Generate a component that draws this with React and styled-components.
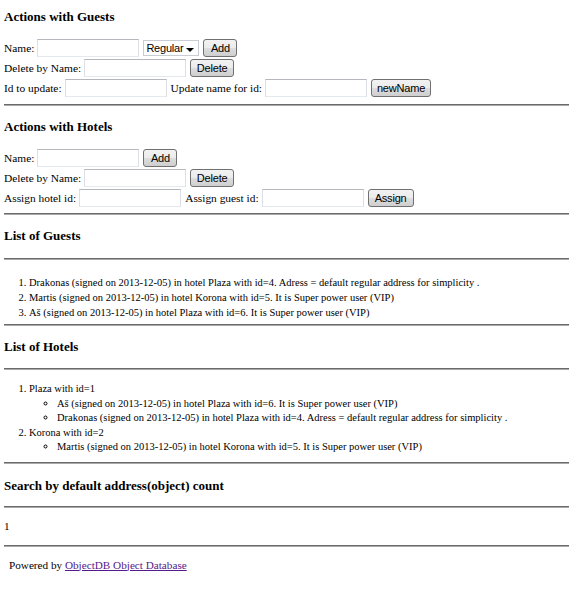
import React from "react";
import styled, { createGlobalStyle } from "styled-components";

const Global = createGlobalStyle`
  html, body { margin: 0; padding: 0; background: #fff; }
  body { font-family: "Liberation Serif", "Times New Roman", serif; font-size: 12px; color: #000; }
`;

const Page = styled.div`
  padding: 0 0 0 4px;
`;

const Heading = styled.h3`
  margin: ${(p) => p.$top ?? 13}px 0 ${(p) => p.$bottom ?? 14}px;
  font-size: 13px;
  line-height: 16px;
  font-weight: bold;
`;

const Rule = styled.hr`
  margin: 0;
  height: 0;
  border: 0;
  border-top: 1px solid #6b6b6b;
  border-bottom: 1px solid #a9a9a9;
`;

const Form = styled.div`
  display: flex;
  flex-direction: column;
  gap: 2px;
  margin-bottom: ${(p) => p.$bottom}px;
`;

const Row = styled.div`
  display: flex;
  align-items: center;
  height: 18px;
  gap: 4px;
`;

const Label = styled.span`
  font-size: 11.4px;
  line-height: 18px;
  white-space: nowrap;
  margin-right: -1px;
`;

const TextInput = styled.input`
  box-sizing: border-box;
  width: 102px;
  height: 18px;
  margin: 0;
  padding: 0 2px;
  border: 1px solid #e3e9ef;
  border-top-color: #b5b7bd;
  border-left-color: #dcdfe6;
  border-right-color: #dcdfe6;
  background: #fff;
  font: 11px "Liberation Sans", Arial, sans-serif;
  outline: none;
`;

const FakeSelect = styled.div`
  box-sizing: border-box;
  width: 56px;
  height: 16px;
  border: 1px solid #c9ccd2;
  display: flex;
  align-items: center;
  justify-content: space-between;
  padding: 0 4px 0 2px;
  font: 11px "Liberation Sans", Arial, sans-serif;
  letter-spacing: -0.2px;
  background: #fff;
`;

const Caret = styled.span`
  width: 0;
  height: 0;
  border-left: 4px solid transparent;
  border-right: 4px solid transparent;
  border-top: 4px solid #000;
  margin-top: 3px;
`;

const Button = styled.button`
  box-sizing: border-box;
  height: 18px;
  width: ${(p) => p.$w}px;
  margin: 0;
  padding: 0;
  border: 1px solid #707070;
  border-radius: 3px;
  background: linear-gradient(#f2f2f2 0%, #ebebeb 50%, #dddddd 50%, #cfcfcf 100%);
  font: 11px "Liberation Sans", Arial, sans-serif;
  letter-spacing: -0.2px;
  color: #000;
  line-height: 16px;
`;

const List = styled.ol`
  margin: ${(p) => p.$top}px 0 ${(p) => p.$bottom}px;
  padding-left: 25px;
  font-size: 10.5px;
  line-height: ${(p) => p.$lh ?? 15}px;
`;

const SubList = styled.ul`
  margin: 0;
  padding-left: 28px;
  list-style: circle;
`;

const Para = styled.div`
  margin: ${(p) => p.$top}px 0 ${(p) => p.$bottom}px ${(p) => p.$left ?? 0}px;
  line-height: 15px;
  font-size: 11.2px;
`;

const Link = styled.a`
  color: #551a8b;
  text-decoration: underline;
`;

const guest1 = "Drakonas (signed on 2013-12-05) in hotel Plaza with id=4. Adress = default regular address for simplicity .";
const guest2 = "Martis (signed on 2013-12-05) in hotel Korona with id=5. It is Super power user (VIP)";
const guest3 = "Aš (signed on 2013-12-05) in hotel Plaza with id=6. It is Super power user (VIP)";

export default function App() {
  return (
    <Page>
      <Global />
      <Heading $top={9}>Actions with Guests</Heading>
      <Form $bottom={7}>
        <Row>
          <Label>Name:</Label>
          <TextInput />
          <FakeSelect>
            <span>Regular</span>
            <Caret />
          </FakeSelect>
          <Button $w={34}>Add</Button>
        </Row>
        <Row>
          <Label>Delete by Name:</Label>
          <TextInput />
          <Button $w={44}>Delete</Button>
        </Row>
        <Row>
          <Label>Id to update:</Label>
          <TextInput />
          <Label>Update name for id:</Label>
          <TextInput />
          <Button $w={60}>newName</Button>
        </Row>
      </Form>
      <Rule />
      <Heading>Actions with Hotels</Heading>
      <Form $bottom={6}>
        <Row>
          <Label>Name:</Label>
          <TextInput />
          <Button $w={34}>Add</Button>
        </Row>
        <Row>
          <Label>Delete by Name:</Label>
          <TextInput />
          <Button $w={44}>Delete</Button>
        </Row>
        <Row>
          <Label>Assign hotel id:</Label>
          <TextInput />
          <Label>Assign guest id:</Label>
          <TextInput />
          <Button $w={46}>Assign</Button>
        </Row>
      </Form>
      <Rule />
      <Heading>List of Guests</Heading>
      <Rule />
      <List $top={15} $bottom={4}>
        <li>{guest1}</li>
        <li>{guest2}</li>
        <li>{guest3}</li>
      </List>
      <Rule />
      <Heading $bottom={13}>List of Hotels</Heading>
      <Rule />
      <List $top={12} $bottom={7} $lh={14.5}>
        <li>
          Plaza with id=1
          <SubList>
            <li>{guest3}</li>
            <li>{guest1}</li>
          </SubList>
        </li>
        <li>
          Korona with id=2
          <SubList>
            <li>{guest2}</li>
          </SubList>
        </li>
      </List>
      <Rule />
      <Heading $top={14} $bottom={12}>Search by default address(object) count</Heading>
      <Rule />
      <Para $top={11} $bottom={11}>1</Para>
      <Rule />
      <Para $top={11} $bottom={20} $left={5}>
        Powered by <Link href="#">ObjectDB Object Database</Link>
      </Para>
    </Page>
  );
}
